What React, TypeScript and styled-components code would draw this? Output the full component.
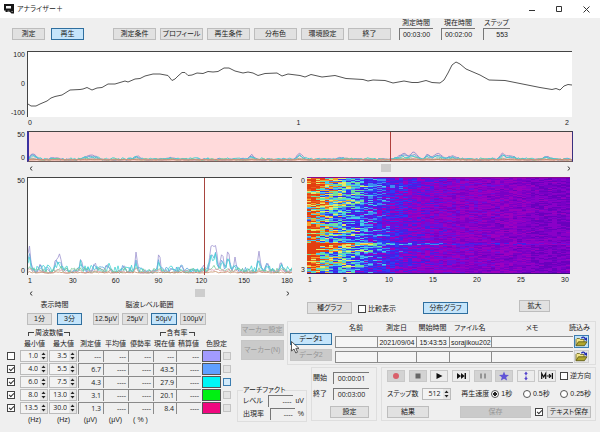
import React from "react";
import styled, { createGlobalStyle, css } from "styled-components";

const GlobalStyle = createGlobalStyle`
  *, *::before, *::after { box-sizing: border-box; }
  body {
    margin: 0;
    background: #efefef;
    color: #222;
    font: 7px/10px "Liberation Sans", "Noto Sans CJK JP", sans-serif;
    font-feature-settings: "palt";
  }
  button, input, output { font: inherit; font-feature-settings: inherit; color: inherit; }
`;

/* ---------- shared controls ---------- */

type ButtonProps = { $w?: number; $h?: number; $active?: boolean; $dim?: boolean };
const Button = styled.button<ButtonProps>`
  display: inline-flex;
  align-items: center;
  justify-content: center;
  flex: none;
  width: ${(p) => (p.$w ? `${p.$w}px` : "100%")};
  height: ${(p) => p.$h ?? 12}px;
  padding: 0;
  white-space: nowrap;
  border: 1px solid #bdbdbd;
  background: #e1e1e1;
  ${(p) => p.$active && css`border-color: #2f6f9f; background: #c5e5fb;`}
  ${(p) => p.$dim && css`border-color: #c6c6c6; background: #cacaca; color: #979797;`}
`;

const TransportButton = styled(Button)<{ $shaded?: boolean }>`
  border-color: #c8c8c8;
  background: ${(p) => (p.$shaded ? "#d3d3d3" : "#ececec")};
`;

const Check = styled.input.attrs({ type: "checkbox" })`
  appearance: none;
  display: block;
  flex: none;
  width: 8px;
  height: 8px;
  margin: 0;
  border: 1px solid #444;
  background: #fff;
  &:checked::after {
    content: "";
    display: block;
    width: 5px;
    height: 3px;
    margin: 1px 0 0 1px;
    border: solid #333;
    border-width: 0 0 1px 1px;
    transform: rotate(-45deg);
  }
`;

const Radio = styled.input.attrs({ type: "radio" })`
  appearance: none;
  flex: none;
  width: 8px;
  height: 8px;
  margin: 0;
  border: 1px solid #555;
  border-radius: 50%;
  background: #fff;
  &:checked { background: radial-gradient(circle, #222 0 2px, #fff 2px); }
`;

const Choice = styled.label`
  display: flex;
  align-items: center;
  gap: 2px;
  white-space: nowrap;
`;

const Readout = styled.output<{ $w: number; $right?: boolean }>`
  display: block;
  width: ${(p) => p.$w}px;
  height: 12px;
  padding: 0 2px;
  line-height: 11px;
  text-align: ${(p) => (p.$right ? "right" : "center")};
  border: solid #777;
  border-width: 1px 0 0 1px;
`;

const SpinBox = styled.span<{ $w: number }>`
  display: flex;
  width: ${(p) => p.$w}px;
  height: 12px;
  border: 1px solid #bbb;
  background: #f3f3f3;
  font-family: "Open Sans", sans-serif;
`;
const SpinInput = styled.input`
  flex: 1;
  min-width: 0;
  padding: 0 2px 0 0;
  border: 0;
  background: none;
  text-align: right;
`;
const SpinButtons = styled.span`
  display: flex;
  flex-direction: column;
  width: 7px;
`;
const SpinButton = styled.button`
  display: flex;
  align-items: center;
  justify-content: center;
  flex: 1;
  padding: 0;
  border: 0;
  background: #e6e6e6;
`;

function Spinner({ value, label, width }: { value: string; label: string; width: number }) {
  return (
    <SpinBox $w={width}>
      <SpinInput aria-label={label} defaultValue={value} />
      <SpinButtons>
        <SpinButton aria-label={`${label} +`}>
          <svg width="5" height="3" viewBox="0 0 5 3"><path d="M0.5 3L2.5 0.5L4.5 3z" fill="#222" /></svg>
        </SpinButton>
        <SpinButton aria-label={`${label} -`}>
          <svg width="5" height="3" viewBox="0 0 5 3"><path d="M0.5 0L2.5 2.5L4.5 0z" fill="#222" /></svg>
        </SpinButton>
      </SpinButtons>
    </SpinBox>
  );
}

/* ---------- title bar and toolbar ---------- */

const TitleBar = styled.header`
  display: flex;
  align-items: center;
  height: 18px;
  padding-left: 4px;
  background: #fff;
`;
const Title = styled.h1`
  flex: 1;
  margin: 0 0 0 3px;
  font-size: 7px;
  font-weight: 400;
`;
const WindowButton = styled.button`
  display: flex;
  justify-content: center;
  width: 27px;
  padding: 0;
  border: 0;
  background: none;
`;
const Toolbar = styled.nav`
  display: flex;
  align-items: flex-end;
  height: 22px;
  margin: 0 0 11px;
  padding: 0 12px;
`;
const ButtonSet = styled.div<{ $gap: number }>`
  display: flex;
  align-items: center;
  gap: ${(p) => p.$gap}px;
`;
const MainMenu = styled(ButtonSet)`
  margin: 0 8px 0 29px;
`;
const Meter = styled.label`
  display: flex;
  flex-direction: column;
  align-items: center;
  white-space: nowrap;
`;

/* ---------- charts ---------- */

const Charts = styled.main`
  display: grid;
  gap: 3px;
`;
const Figure = styled.section<{ $right: number; $left?: number }>`
  display: grid;
  grid-template-columns: ${(p) => p.$left ?? 27}px 1fr;
  align-content: start;
  padding-right: ${(p) => p.$right}px;
`;
const YAxis = styled.div`
  display: flex;
  flex-direction: column;
  justify-content: space-between;
  padding-right: 2px;
  text-align: right;
  line-height: 8px;
`;
const Plot = styled.svg.attrs({ preserveAspectRatio: "none" })<{ $h: number; $pink?: boolean; $frame?: boolean }>`
  display: block;
  width: 100%;
  height: ${(p) => p.$h}px;
  background: ${(p) => (p.$pink ? "#ffdadb" : "#fff")};
  border-top: ${(p) => (p.$frame ? "1px solid #444" : "0")};
  border-left: ${(p) => (p.$frame ? "1px solid #444" : "0")};
  ${(p) => p.$pink && css`
    border-left: 2px solid #3a32a0;
    border-right: 1px solid #3a2f80;
    border-bottom: 1px solid #78605c;
  `}
`;
const XAxis = styled.div<{ $h: number; $shortFirst?: boolean }>`
  grid-column: 2;
  display: flex;
  justify-content: space-between;
  height: ${(p) => p.$h}px;
  margin: 0 -1px 0 -3px;
  padding-top: 1px;
  span {
    width: 12px;
    text-align: center;
  }
  span:first-child {
    margin-right: ${(p) => (p.$shortFirst ? -9 : 0)}px;
  }
`;
const ScrollBar = styled.div`
  grid-column: 2;
  display: flex;
  align-items: center;
  height: 12px;
`;
const Track = styled.div<{ $before: number; $after: number }>`
  display: grid;
  flex: 1;
  grid-template-columns: ${(p) => p.$before}fr 10px ${(p) => p.$after}fr;
`;
const Thumb = styled.div`
  grid-column: 2;
  height: 8px;
  background: #cdcdcd;
`;
const ArrowButton = styled.button`
  display: flex;
  align-items: center;
  justify-content: center;
  width: 8px;
  height: 8px;
  padding: 0;
  border: 0;
  background: none;
`;
const Pair = styled.div`
  display: grid;
  grid-template-columns: 292fr 308fr;
`;

function Scroll({ before, after }: { before: number; after: number }) {
  return (
    <ScrollBar>
      <ArrowButton aria-label="前へ">
        <svg width="4" height="5" viewBox="0 0 4 5"><path d="M3.3 0.5L1 2.5L3.3 4.5" fill="none" stroke="#333" /></svg>
      </ArrowButton>
      <Track $before={before} $after={after}><Thumb /></Track>
      <ArrowButton aria-label="次へ">
        <svg width="4" height="5" viewBox="0 0 4 5"><path d="M0.7 0.5L3 2.5L0.7 4.5" fill="none" stroke="#333" /></svg>
      </ArrowButton>
    </ScrollBar>
  );
}

const EEG =
  "0,52 3,54 8,54 12,52 19,49 23,46 27,44.5 34,43 42,38 52,37.5 55,37 59,35.5 64,38 69,36 74,35.5 80,32 87,32 97,29 100,30 107,27 112,26.5 117,24 125,22 132,22 140,23.5 142,26 144,28.5 147,27 150,24 154,20.5 157,20.5 160,23.5 164,23 169,21 175,21.5 180,19.5 185,20 190,19.5 196,16 201,16 207,19 215,21 220,20 225,21 230,23.5 237,21.5 249,21 254,24 260,22 272,23.5 277,25 283,22.5 294,25 307,23.5 318,26.5 335,27.5 340,29 345,28 357,28.5 365,31 376,29 384,30.5 390,30.5 398,28.5 404,30.5 412,31 416,28 420,21 424,13 428,10 432,12 438,17 452,23 461,28 477,28.5 492,31.5 512,35.5 524,37.5 528,36.5 532,38 536,34 540,32.5 544,33";

function randomSource(seed: number) {
  let s = seed;
  return () => {
    s = (s * 1664525 + 1013904223) % 4294967296;
    return s / 4294967296;
  };
}

type Peak = [number, number, number];
function wave(width: number, base: number, step: number, peaks: Peak[], gain: number, noise: number, seed: number) {
  const rnd = randomSource(seed);
  const points: string[] = [];
  for (let x = 0; x <= width; x += step) {
    let v = noise * Math.pow(rnd(), 1.6);
    for (const [px, h, w] of peaks) v += h * gain * Math.exp(-(((x - px) / w) ** 2)) * (0.85 + 0.2 * rnd());
    points.push(`${x},${(base - v).toFixed(1)}`);
  }
  return points.join(" ");
}

const DETAIL_PEAKS: Peak[] = [
  [1, 28, 2], [12, 8, 2], [27, 6, 1.5], [31, 17, 3], [53, 13, 2], [67, 9, 2], [72, 5, 2], [80, 7, 2], [96, 6, 2], [108, 20, 1.4],
  [131, 24, 1.2], [144, 4, 2], [153, 6, 2], [175, 5, 2], [184, 27, 3], [188, 22, 2], [194, 20, 2], [200, 21, 2], [207, 12, 2],
  [231, 19, 1.8], [239, 8, 2], [253, 9, 1.7],
];
const STRIP_PEAKS: Peak[] = [
  [4, 7, 4], [25, 2, 5], [58, 3, 5], [65, 4, 5], [108, 4, 4], [143, 2, 5], [224, 5, 3], [272, 7, 4], [315, 2, 7],
  [376, 6, 6], [387, 8, 5], [401, 6, 3], [411, 7, 5], [426, 4, 6], [476, 6, 3], [483, 4, 7], [521, 4, 4],
];
const BANDS = [
  { color: "#9d93cf", gain: 1, noise: 4 },
  { color: "#5ea6dc", gain: 0.65, noise: 6 },
  { color: "#41d3d2", gain: 0.45, noise: 8 },
  { color: "#79c995", gain: 0.16, noise: 5 },
  { color: "#df9cad", gain: 0.1, noise: 3 },
  { color: "#c48a62", gain: 0.03, noise: 1 },
];

const HEAT_COLORS = [
  "#6900bd", "#7800c6", "#8a00c8", "#9c00c0", "#6a10dc", "#4420e6", "#2e3cf4",
  "#3f8bf0", "#48cfe8", "#6fdf9a", "#e2e96b", "#f2a52c", "#ea5f1c", "#e23f10",
];

function buildHeat() {
  const cols = 60;
  const rows = 96;
  const rnd = randomSource(77);
  const paths = HEAT_COLORS.map(() => "");
  let drift = 0;
  for (let y = 0; y < rows; y++) {
    drift = drift * 0.5 + (rnd() - 0.5) * 4.4;
    const hot = y > 64 && y < 74 ? 2.6 : 0;
    const line = y === 65 || y === 66 ? 2 : 0;
    for (let x = 0; x < cols; x++) {
      const trend = 8.6 * Math.exp(-((x / 18) ** 1.3)) + 1.6;
      const reach = Math.exp(-x / 14);
      let v = trend + drift * reach + hot * reach + line * 0.9;
      v += (rnd() - 0.5) * (3 + 4.6 * reach);
      if (x < 3) v += 2;
      if (x > 50) v -= 0.6;
      const i = Math.max(0, Math.min(HEAT_COLORS.length - 1, Math.round(v)));
      paths[i] += `M${x} ${y}h1v1h-1z`;
    }
  }
  return paths;
}
const HEAT = buildHeat();

/* ---------- lower half ---------- */

const Lower = styled.div`
  display: flex;
  align-items: flex-start;
`;
const LeftPanel = styled.div`
  flex: none;
  width: 235px;
  padding-left: 7px;
`;
const RightPanel = styled.div`
  flex: 1;
  min-width: 0;
  padding-right: 4px;
`;
const RangeRow = styled.div`
  display: flex;
  gap: 11px;
  padding: 1px 0 2px 20px;
`;
const RangeGroup = styled.div`
  display: grid;
  gap: 3px;
  justify-items: center;
`;
const BandTable = styled.table`
  width: 225px;
  table-layout: fixed;
  border-collapse: collapse;
  line-height: 10px;
  th, td { padding: 0; font-weight: 400; white-space: nowrap; }
  thead tr { height: 11px; }
  tbody td { height: 13px; }
  tfoot tr { height: 12px; }
`;
const Bracket = styled.span<{ $w: number }>`
  display: flex;
  align-items: center;
  gap: 1px;
  width: ${(p) => p.$w}px;
  margin: 0 auto;
  &::before, &::after {
    content: "";
    flex: 1;
    height: 4px;
    margin-top: 3px;
    border-top: 1px solid #444;
  }
  &::before { border-left: 1px solid #444; }
  &::after { border-right: 1px solid #444; }
`;
const Value = styled.div`
  height: 12px;
  padding-right: 2px;
  text-align: right;
  font-family: "Open Sans", sans-serif;
  line-height: 12px;
  border: solid #8a8a8a;
  border-width: 1px 0 0 1px;
`;
const Swatch = styled.button<{ $color: string }>`
  display: block;
  width: 19px;
  height: 12px;
  margin: 0 auto;
  padding: 0;
  border: 1px solid #555;
  background: ${(p) => p.$color};
`;
const Pick = styled.button<{ $on: boolean }>`
  display: block;
  width: 8px;
  height: 8px;
  margin: 0 auto;
  padding: 0;
  border: 1px solid ${(p) => (p.$on ? "#3c7db0" : "#c4c4c4")};
  background: ${(p) => (p.$on ? "#d3ebfb" : "#e4e4e4")};
`;
const GraphRow = styled.div`
  display: flex;
  align-items: flex-end;
  height: 15px;
  margin-bottom: 7px;
  padding: 0 46px 0 72px;
`;
const CompareChoice = styled(Choice)`
  margin: 0 auto 0 6px;
`;
const DistSlot = styled.div`
  margin-right: 51px;
`;
const ZoomSlot = styled.div`
  align-self: flex-start;
  margin-top: 1px;
`;
const Split = styled.div`
  display: flex;
  align-items: flex-start;
  gap: 4px;
`;
const MarkerColumn = styled.div`
  display: grid;
  gap: 4px;
  flex: none;
  width: 48px;
  padding: 3px 0 0 6px;
`;
const Group = styled.fieldset`
  min-width: 0;
  margin: 0;
  padding: 0;
  border: 1px solid #dedede;
`;
const DataGroup = styled(Group)`
  display: grid;
  grid-template-columns: 42px 1fr;
  gap: 3px;
  flex: 1;
  height: 44px;
  padding: 0 5px 0 2px;
`;
const DataButtons = styled.div`
  position: relative;
  display: grid;
  gap: 4px;
  align-content: start;
  padding-top: 11px;
`;
const Pointer = styled.svg`
  position: absolute;
  left: 1px;
  top: 19px;
`;
const FileTable = styled.table`
  align-self: start;
  width: 100%;
  table-layout: fixed;
  border-collapse: collapse;
  th, td { padding: 0; font-weight: 400; white-space: nowrap; line-height: 10px; }
  th { height: 12px; }
  td { height: 15px; }
`;
const OpenHeading = styled.span`
  display: block;
  margin-left: -4px;
  text-align: left;
`;
const FileCell = styled.div`
  height: 12px;
  padding: 0 1px;
  text-align: center;
  line-height: 11px;
  background: #f5f5f5;
  border: 1px solid #8c8c8c;
  border-right-width: 0;
`;
const OpenButton = styled.button<{ $on: boolean }>`
  display: flex;
  align-items: center;
  justify-content: center;
  width: 15px;
  height: 13px;
  margin-left: 1px;
  padding: 0;
  border: 1px solid ${(p) => (p.$on ? "#3c7db0" : "#cfcfcf")};
  background: ${(p) => (p.$on ? "#bfe2f8" : "#e5e5e5")};
`;
const Bottom = styled(Split)`
  margin-top: 2px;
`;
const Artifact = styled(Group)`
  width: 70px;
  margin: 18px 0 0 2px;
  padding: 0 2px 1px 5px;
  legend { padding: 0; line-height: 10px; }
`;
const FieldLine = styled.label<{ $gap: number; $bottom?: number }>`
  display: flex;
  align-items: center;
  justify-content: space-between;
  gap: ${(p) => p.$gap}px;
  margin-bottom: ${(p) => p.$bottom ?? 0}px;
  white-space: nowrap;
  output { font-family: "Open Sans", sans-serif; }
`;
const FieldName = styled.span`
  flex: 1;
`;
const TimeGroup = styled(Group)`
  width: 66px;
  height: 54px;
  padding: 4px 7px 0 1px;
`;
const SetSlot = styled.div`
  display: flex;
  justify-content: flex-end;
  margin-top: 6px;
`;
const PlayGroup = styled(Group)`
  display: flex;
  flex-direction: column;
  justify-content: space-between;
  flex: 1;
  height: 54px;
  padding: 2px 4px 2px 5px;
`;
const Line = styled.div`
  display: flex;
  align-items: center;
  justify-content: space-between;
`;

function OpenIcon() {
  return (
    <svg width="13" height="11" viewBox="0 0 13 11">
      <path d="M1 9.5V3.5L2 2.5H4.5L5.5 3.5H9V6" fill="#f3e58a" stroke="#64611d" strokeWidth="0.8" />
      <path d="M1 9.7L3.4 5.8H12L9.4 9.7z" fill="#b0a62d" stroke="#555310" strokeWidth="0.8" />
      <path d="M6.4 2.2Q8.5 0 10.3 2.6" fill="none" stroke="#202bb0" strokeWidth="1.3" />
      <path d="M8.4 3L12 1.6V5z" fill="#202bb0" />
    </svg>
  );
}

const BAND_ROWS = [
  { on: false, min: "1.0", max: "3.5", values: ["---", "---", "---", "---", "---"], color: "#a29bff", pick: false },
  { on: true, min: "4.0", max: "5.5", values: ["6.7", "----", "----", "43.5", "----"], color: "#5fa0ff", pick: false },
  { on: true, min: "6.0", max: "7.5", values: ["4.3", "----", "----", "27.9", "----"], color: "#00f6f6", pick: true },
  { on: true, min: "8.0", max: "13.0", values: ["3.1", "----", "----", "20.1", "----"], color: "#00f012", pick: false },
  { on: true, min: "13.5", max: "30.0", values: ["1.3", "----", "----", "8.4", "----"], color: "#f0087f", pick: false },
];
const BAND_COLUMNS = [13, 29, 29, 25, 25, 25, 23, 25, 21, 10];
const FILE_COLUMNS = [42, 39, 33, 42];
const FILES = [["", "2021/09/04", "15:43:53", "sorajikou202", ""], ["", "", "", "", ""]];

const TRANSPORT: { name: string; shaded?: boolean; art: React.ReactNode }[] = [
  { name: "録画", shaded: true, art: <circle cx="6" cy="5" r="3" fill="#d9606b" /> },
  { name: "停止", shaded: true, art: <path d="M3.5 2.5h5v5h-5z" fill="#666" /> },
  { name: "再生", art: <path d="M3.5 2v6l6-3z" fill="#111" /> },
  { name: "早送り", art: <path d="M2 2v6l4-3v3l3.6-3v3H11V2H9.6v3L6 2v3z" fill="#111" /> },
  { name: "一時停止", shaded: true, art: <path d="M4 2.5v5M8 2.5v5" stroke="#555" /> },
  { name: "マーク", shaded: true, art: <path d="M6 0.5L7.3 3.7L11 4L8.2 6.2L9.1 9.6L6 7.7L2.9 9.6L3.8 6.2L1 4L4.7 3.7z" fill="#6054d6" /> },
  { name: "上下", art: <path d="M6 0.5L7.8 3H4.2zM5.3 3h1.4v1.2H5.3zM5.3 5.6h1.4V7H5.3zM4.2 7h3.6L6 9.5z" fill="#5544cc" /> },
  { name: "マーカーへ移動", art: <path d="M0.7 8V2.5L2.7 6L4.7 2.5V8M5.8 5h3.6M8 3.2L9.8 5L8 6.8M11.4 2v6" fill="none" stroke="#111" strokeWidth="1.2" /> },
];

export default function App() {
  return (
    <>
      <GlobalStyle />
      <TitleBar>
        <svg width="10" height="10" viewBox="0 0 10 10">
          <path d="M0 0h10v9.5H7.5L6 8H1.5V6.6H0z" fill="#171717" />
          <path d="M2 2h5v2.5H2z" fill="#f4f4f4" />
          <path d="M3.5 7.2h2M7.6 8l1-1" stroke="#ddd" strokeWidth="0.8" />
        </svg>
        <Title>アナライザー＋</Title>
        <WindowButton aria-label="最小化"><svg width="7" height="7"><path d="M0 4.5h6" stroke="#333" /></svg></WindowButton>
        <WindowButton aria-label="最大化"><svg width="7" height="7"><path d="M0.5 0.5h5v5h-5z" fill="none" stroke="#333" /></svg></WindowButton>
        <WindowButton aria-label="閉じる"><svg width="7" height="7"><path d="M0.5 0.5l6 6M6.5 0.5l-6 6" stroke="#333" /></svg></WindowButton>
      </TitleBar>

      <Toolbar>
        <ButtonSet $gap={6}>
          <Button $w={33}>測定</Button>
          <Button $w={33} $active>再生</Button>
        </ButtonSet>
        <MainMenu $gap={4}>
          {["測定条件", "プロフィール", "再生条件", "分布色", "環境設定", "終了"].map((t) => (
            <Button key={t} $w={43}>{t}</Button>
          ))}
        </MainMenu>
        <ButtonSet $gap={8}>
          <Meter>測定時間<Readout $w={34}>00:03:00</Readout></Meter>
          <Meter>現在時間<Readout $w={34}>00:02:00</Readout></Meter>
          <Meter>ステップ<Readout $w={27} $right>553</Readout></Meter>
        </ButtonSet>
      </Toolbar>

      <Charts>
        <Figure $right={28}>
          <YAxis><span>100</span><span>0</span><span>-100</span></YAxis>
          <Plot $h={66} $frame viewBox="0 0 544 65">
            <polyline points={EEG} fill="none" stroke="#555" vectorEffect="non-scaling-stroke" />
          </Plot>
          <XAxis $h={11}><span>0</span><span>1</span><span>2</span></XAxis>
        </Figure>

        <Figure $right={27}>
          <YAxis><span>50</span><span>0</span></YAxis>
          <Plot $h={31} $pink $frame viewBox="0 0 546 30">
            {BANDS.map((b, i) => (
              <polyline key={b.color} points={wave(546, 29, 2, STRIP_PEAKS, b.gain, b.noise * 0.3, 11 + i)} fill="none" stroke={b.color} vectorEffect="non-scaling-stroke" />
            ))}
            <path d="M363.5 0V30" stroke="#b0403c" vectorEffect="non-scaling-stroke" />
          </Plot>
          <Scroll before={346} after={174} />
        </Figure>

        <Pair>
          <Figure $right={0}>
            <YAxis><span>50</span><span>0</span></YAxis>
            <Plot $h={98} $frame viewBox="0 0 264 97">
              {BANDS.map((b, i) => (
                <polyline key={b.color} points={wave(264, 95, 1.5, DETAIL_PEAKS, b.gain, b.noise, 31 + i)} fill="none" stroke={b.color} strokeWidth="0.8" vectorEffect="non-scaling-stroke" />
              ))}
              <path d="M176.5 0V97" stroke="#a8453f" vectorEffect="non-scaling-stroke" />
            </Plot>
            <XAxis $h={12}>
              {["1", "30", "60", "90", "120", "150", "180"].map((t) => <span key={t}>{t}</span>)}
            </XAxis>
            <Scroll before={160} after={79} />
          </Figure>
          <Figure $right={30} $left={15}>
            <YAxis><span>0</span><span>3</span></YAxis>
            <Plot $h={97} viewBox="0 0 60 96" shapeRendering="crispEdges">
              {HEAT.map((d, i) => <path key={HEAT_COLORS[i]} d={d} fill={HEAT_COLORS[i]} />)}
              <path d="M0 0h60v1H0z" fill="#8a0a8e" />
              <path d="M0 95h60v1H0z" fill="#3a1478" />
            </Plot>
            <XAxis $h={12} $shortFirst>
              {["1", "5", "10", "15", "20", "25", "30"].map((t) => <span key={t}>{t}</span>)}
            </XAxis>
          </Figure>
        </Pair>
      </Charts>

      <Lower>
        <LeftPanel>
          <RangeRow>
            <RangeGroup>
              表示時間
              <ButtonSet $gap={5}>
                <Button $w={25}>1分</Button>
                <Button $w={25} $active>3分</Button>
              </ButtonSet>
            </RangeGroup>
            <RangeGroup>
              脳波レベル範囲
              <ButtonSet $gap={3}>
                <Button $w={26}>12.5μV</Button>
                <Button $w={26}>25μV</Button>
                <Button $w={26} $active>50μV</Button>
                <Button $w={26}>100μV</Button>
              </ButtonSet>
            </RangeGroup>
          </RangeRow>
          <BandTable>
            <colgroup>{BAND_COLUMNS.map((w, i) => <col key={i} width={w} />)}</colgroup>
            <thead>
              <tr>
                <td />
                <th colSpan={2}><Bracket $w={42}>周波数幅</Bracket></th>
                <td colSpan={3} />
                <th colSpan={2}><Bracket $w={35}>含有率</Bracket></th>
                <td colSpan={2} />
              </tr>
              <tr>
                <td />
                <th>最小値</th><th>最大値</th><th>測定値</th><th>平均値</th><th>優勢率</th><th>現在値</th><th>積算値</th>
                <th colSpan={2}>色設定</th>
              </tr>
            </thead>
            <tbody>
              {BAND_ROWS.map((r) => (
                <tr key={r.min}>
                  <td><Check defaultChecked={r.on} aria-label={`${r.min} Hz`} /></td>
                  <td><Spinner value={r.min} label="最小値" width={28} /></td>
                  <td><Spinner value={r.max} label="最大値" width={28} /></td>
                  {r.values.map((v, i) => <td key={i}><Value>{v}</Value></td>)}
                  <td><Swatch $color={r.color} aria-label="色設定" /></td>
                  <td><Pick $on={r.pick} aria-label="選択" /></td>
                </tr>
              ))}
            </tbody>
            <tfoot>
              <tr>
                <td />
                <th>(Hz)</th><th>(Hz)</th><th>(μV)</th><th>(μV)</th><th>( % )</th>
                <td colSpan={4} />
              </tr>
            </tfoot>
          </BandTable>
        </LeftPanel>

        <RightPanel>
          <GraphRow>
            <Button $w={45}>種グラフ</Button>
            <CompareChoice><Check />比較表示</CompareChoice>
            <DistSlot><Button $w={45} $active>分布グラフ</Button></DistSlot>
            <ZoomSlot><Button $w={31}>拡大</Button></ZoomSlot>
          </GraphRow>
          <Split>
            <MarkerColumn>
              <Button $dim>マーカー設定</Button>
              <Button $dim $h={20}>マーカー(N)</Button>
            </MarkerColumn>
            <DataGroup>
              <DataButtons>
                <Button $active>データ1</Button>
                <Button $dim>データ2</Button>
                <Pointer width="10" height="13" viewBox="0 0 10 13">
                  <path d="M0.5 0.5V10L3 8L4.8 12L6.5 11.2L4.8 7.4H8z" fill="#fff" stroke="#333" strokeWidth="0.8" />
                </Pointer>
              </DataButtons>
              <FileTable>
                <colgroup>
                  {FILE_COLUMNS.map((w, i) => <col key={i} width={w} />)}
                  <col />
                  <col width={17} />
                </colgroup>
                <thead>
                  <tr>
                    <th>名前</th><th>測定日</th><th>開始時間</th><th>ファイル名</th><th>メモ</th>
                    <th><OpenHeading>読込み</OpenHeading></th>
                  </tr>
                </thead>
                <tbody>
                  {FILES.map((f, n) => (
                    <tr key={n}>
                      {f.map((t, i) => <td key={i}><FileCell>{t}</FileCell></td>)}
                      <td><OpenButton $on={n === 0} aria-label="読込み"><OpenIcon /></OpenButton></td>
                    </tr>
                  ))}
                </tbody>
              </FileTable>
            </DataGroup>
          </Split>
          <Bottom>
            <Artifact>
              <legend>アーチファクト</legend>
              <FieldLine $gap={2} $bottom={1}><FieldName>レベル</FieldName><Readout $w={25} $right>----</Readout>uV</FieldLine>
              <FieldLine $gap={3}><FieldName>出現率</FieldName><Readout $w={25} $right>----</Readout>%</FieldLine>
            </Artifact>
            <TimeGroup>
              <FieldLine $gap={2} $bottom={4}>開始<Readout $w={36}>00:00:01</Readout></FieldLine>
              <FieldLine $gap={2}>終了<Readout $w={36}>00:03:00</Readout></FieldLine>
              <SetSlot><Button $w={39}>設定</Button></SetSlot>
            </TimeGroup>
            <PlayGroup>
              <Line>
                {TRANSPORT.map((b) => (
                  <TransportButton key={b.name} $w={18} $shaded={b.shaded} aria-label={b.name}>
                    <svg width="12" height="10" viewBox="0 0 12 10">{b.art}</svg>
                  </TransportButton>
                ))}
                <Choice><Check />逆方向</Choice>
              </Line>
              <Line>
                <ButtonSet $gap={3}>
                  ステップ数
                  <Spinner value="512" label="ステップ数" width={29} />
                </ButtonSet>
                <ButtonSet $gap={2}>
                  再生速度
                  <Choice><Radio name="speed" defaultChecked />1秒</Choice>
                </ButtonSet>
                <Choice><Radio name="speed" />0.5秒</Choice>
                <Choice><Radio name="speed" />0.25秒</Choice>
              </Line>
              <Line>
                <Button $w={42}>結果</Button>
                <ButtonSet $gap={4}>
                  <Button $w={71} $dim>保存</Button>
                  <Choice><Check defaultChecked aria-label="テキスト保存" /></Choice>
                  <Button $w={44}>テキスト保存</Button>
                </ButtonSet>
              </Line>
            </PlayGroup>
          </Bottom>
        </RightPanel>
      </Lower>
    </>
  );
}
